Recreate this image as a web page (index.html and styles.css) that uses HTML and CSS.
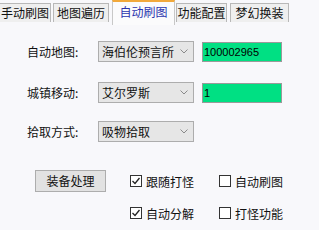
FILE: index.html
```html
<!DOCTYPE html>
<html lang="zh">
<head>
<meta charset="utf-8">
<link rel="stylesheet" href="styles.css">
</head>
<body>
<div class="tabs">
  <div class="tab t1">手动刷图</div>
  <div class="tab t2">地图遍历</div>
  <div class="tab active t3">自动刷图</div>
  <div class="tab t4">功能配置</div>
  <div class="tab t5">梦幻换装</div>
</div>
<div class="panel">
  <div class="row r1">
    <span class="label">自动地图:</span>
    <div class="select"><span class="sel-text">海伯伦预言所</span><svg class="chev" width="8" height="5" viewBox="0 0 8 5"><path d="M0.5 0.5 L4 4 L7.5 0.5" fill="none" stroke="#8a8a8a" stroke-width="1"/></svg></div>
    <div class="field">100002965</div>
  </div>
  <div class="row r2">
    <span class="label">城镇移动:</span>
    <div class="select"><span class="sel-text">艾尔罗斯</span><svg class="chev" width="8" height="5" viewBox="0 0 8 5"><path d="M0.5 0.5 L4 4 L7.5 0.5" fill="none" stroke="#8a8a8a" stroke-width="1"/></svg></div>
    <div class="field">1</div>
  </div>
  <div class="row r3">
    <span class="label">拾取方式:</span>
    <div class="select"><span class="sel-text">吸物拾取</span><svg class="chev" width="8" height="5" viewBox="0 0 8 5"><path d="M0.5 0.5 L4 4 L7.5 0.5" fill="none" stroke="#8a8a8a" stroke-width="1"/></svg></div>
  </div>
  <div class="bottom">
    <div class="btn">装备处理</div>
    <div class="checks">
      <div class="check"><span class="box on"><svg width="10" height="10" viewBox="0 0 10 10"><path d="M1.5 5 L4 7.5 L8.5 2" fill="none" stroke="#222" stroke-width="1.3"/></svg></span><span>跟随打怪</span></div>
      <div class="check"><span class="box"></span><span>自动刷图</span></div>
      <div class="check"><span class="box on"><svg width="10" height="10" viewBox="0 0 10 10"><path d="M1.5 5 L4 7.5 L8.5 2" fill="none" stroke="#222" stroke-width="1.3"/></svg></span><span>自动分解</span></div>
      <div class="check"><span class="box"></span><span>打怪功能</span></div>
    </div>
  </div>
</div>
</body>
</html>
```
FILE: styles.css
```css
* { box-sizing: border-box; }
html, body {
  margin: 0;
  padding: 0;
  width: 319px;
  height: 230px;
  overflow: hidden;
  background: #f8f8fb;
  font-family: "Noto Sans CJK SC", "Microsoft YaHei", sans-serif;
  font-size: 12px;
  color: #111;
}
.tabs {
  display: flex;
  align-items: flex-end;
  height: 25px;
}
.tab {
  height: 19px;
  margin-bottom: 3px;
  background: #efefef;
  border: 1px solid #b8b8b8;
  border-bottom: none;
  line-height: 17px;
  text-align: center;
  white-space: nowrap;
}
.t1 { width: 52px; margin-left: -1px; }
.t2 { width: 56px; margin-left: 2px; }
.t3 { width: 63px; margin-left: 3px; }
.t4 { width: 51px; margin-left: 1px; }
.t5 { width: 59px; margin-left: 3px; }
.tab.active {
  height: 25px;
  margin-bottom: 0;
  background: #fbfbfc;
  border-color: #c8c8c8;
  border-top: 2px solid #f2a93b;
  color: #2a34ae;
  line-height: 20px;
}
.panel {
  padding-left: 27px;
}
.row {
  display: flex;
  align-items: center;
  height: 21px;
}
.r1 { margin-top: 16px; }
.r2 { margin-top: 20px; }
.r3 { margin-top: 18px; }
.label {
  width: 71px;
  line-height: 21px;
}
.select {
  width: 96px;
  height: 21px;
  background: #e6e6e6;
  border: 1px solid #adadad;
  display: flex;
  align-items: center;
  justify-content: space-between;
  padding: 0 5px 0 3px;
}
.sel-text { line-height: 19px; }
.chev { display: block; }
.field {
  margin-left: 8px;
  width: 80px;
  height: 20px;
  background: #00e083;
  border: 1px solid #9a9a9a;
  font-family: "Liberation Sans", Arial, sans-serif;
  font-size: 11px;
  line-height: 18px;
  padding-left: 1px;
  color: #000;
}
.bottom {
  display: flex;
  align-items: flex-start;
  margin-top: 28px;
  margin-left: 8px;
}
.btn {
  width: 71px;
  height: 22px;
  background: #e2e2e2;
  border: 1px solid #adadad;
  text-align: center;
  line-height: 20px;
}
.checks {
  margin-left: 24px;
  display: grid;
  grid-template-columns: 89px 70px;
  row-gap: 10px;
}
.check {
  display: flex;
  align-items: center;
  height: 22px;
  gap: 4px;
}
.box {
  width: 12px;
  height: 12px;
  border: 1px solid #333;
  background: #fff;
  display: flex;
  align-items: center;
  justify-content: center;
}
.box svg { display: block; }
```
